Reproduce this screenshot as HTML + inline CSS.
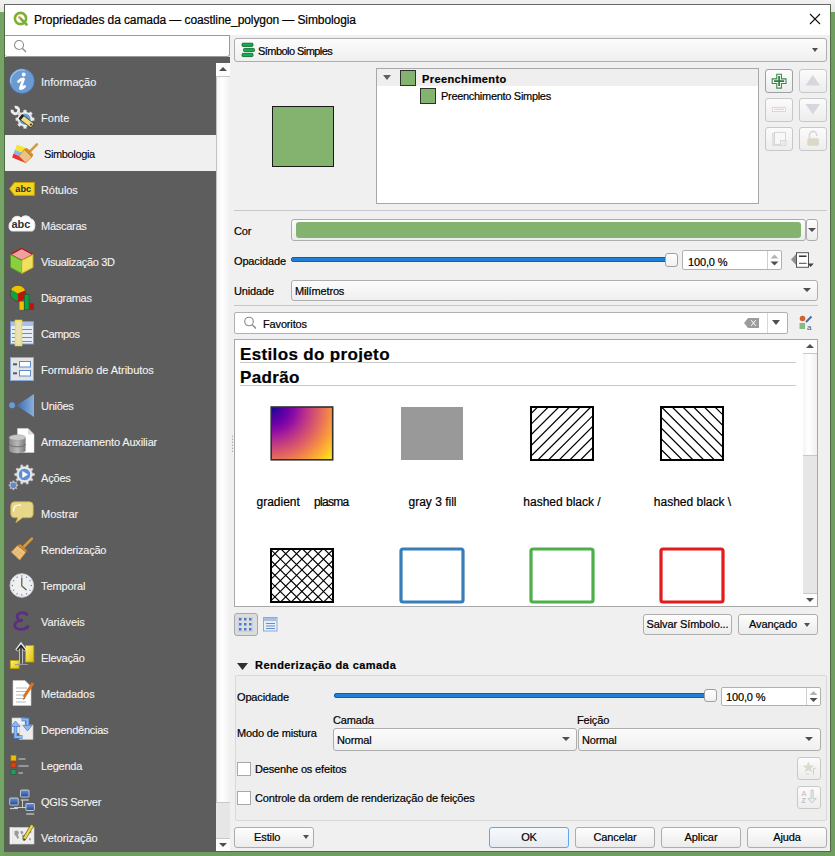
<!DOCTYPE html>
<html><head><meta charset="utf-8">
<style>
*{box-sizing:border-box;margin:0;padding:0}
html,body{width:835px;height:856px;overflow:hidden}
body{position:relative;background:#6f9e60;font-family:"Liberation Sans",sans-serif;font-size:11px;color:#000}
.a{position:absolute}
.t{position:absolute;white-space:nowrap;line-height:13px;font-size:11px;letter-spacing:-0.15px;-webkit-text-stroke:0.2px currentColor}
#topbar{left:0;top:0;width:835px;height:12px;background:linear-gradient(#f2f2f2,#e4e4e4)}
#dlg{left:4px;top:4px;width:827px;height:848px;background:#f0f0f0;border:1px solid #4d6a45;border-top-color:#6a6a6a}
#title{left:5px;top:5px;width:825px;height:30px;background:#fff}
#side{left:5px;top:57px;width:225px;height:794px;background:#5d5d5d;overflow:hidden}
.row{position:absolute;left:0;width:211px;height:36px}
.row.sel{background:#f0f0f0}
.row .lbl{position:absolute;left:36px;top:13px;color:#f4f4f4;font-size:11px;line-height:13px;white-space:nowrap;-webkit-text-stroke:0.1px currentColor}
.row.sel .lbl{left:39px;color:#000}
.row svg{position:absolute;left:5px;top:6px}
.btn{position:absolute;border:1px solid #adadad;border-radius:3px;background:linear-gradient(#fdfdfd,#ececec);font-size:11px;line-height:19.5px;text-align:center;white-space:nowrap;letter-spacing:-0.1px;-webkit-text-stroke:0.2px currentColor}
.combo{position:absolute;border:1px solid #adadad;border-radius:3px;background:linear-gradient(#fcfcfc,#efefef);font-size:11px;white-space:nowrap}
.arrow{position:absolute;width:0;height:0;border-left:5px solid transparent;border-right:5px solid transparent;border-top:5px solid #505050}
.hline{position:absolute;height:1px;background:#c8c8c8}
</style></head><body>
<div id="topbar" class="a"></div>
<div class="a" style="left:0;top:12px;width:4px;height:844px;background:#76a466"></div>
<div id="dlg" class="a"></div>
<div id="title" class="a"></div>
<!-- title -->
<svg class="a" style="left:13px;top:11px" width="16" height="16" viewBox="0 0 16 16">
 <circle cx="7.5" cy="7.5" r="5.6" fill="none" stroke="#80b030" stroke-width="2.6"/>
 <line x1="8" y1="8" x2="13.5" y2="13.5" stroke="#78b040" stroke-width="2.6" stroke-linecap="round"/>
 <circle cx="6.5" cy="6.5" r="1.3" fill="#f08030"/>
</svg>
<div class="t" style="left:34px;top:13px;font-size:12px;line-height:14px;letter-spacing:-0.09px">Propriedades da camada — coastline_polygon — Simbologia</div>
<svg class="a" style="left:809px;top:13px" width="12" height="12" viewBox="0 0 12 12"><path d="M1 1L11 11M11 1L1 11" stroke="#111" stroke-width="1.1"/></svg>

<!-- search -->
<div class="a" style="left:5px;top:35px;width:225px;height:22px;background:#fff;border:1px solid #9a9a9a;border-radius:0 0 3px 3px;border-left:none"></div>

<div id="side" class="a">
<div class="row" style="top:6px"><div class="lbl" style="letter-spacing:0.04px">Informação</div></div>
<div class="row" style="top:42px"><div class="lbl" style="letter-spacing:0.03px">Fonte</div></div>
<div class="row sel" style="top:78px"><div class="lbl" style="letter-spacing:-0.37px">Simbologia</div></div>
<div class="row" style="top:114px"><div class="lbl" style="letter-spacing:-0.09px">Rótulos</div></div>
<div class="row" style="top:150px"><div class="lbl" style="letter-spacing:-0.26px">Máscaras</div></div>
<div class="row" style="top:186px"><div class="lbl" style="letter-spacing:-0.34px">Visualização 3D</div></div>
<div class="row" style="top:222px"><div class="lbl" style="letter-spacing:-0.28px">Diagramas</div></div>
<div class="row" style="top:258px"><div class="lbl" style="letter-spacing:-0.39px">Campos</div></div>
<div class="row" style="top:294px"><div class="lbl" style="letter-spacing:-0.04px">Formulário de Atributos</div></div>
<div class="row" style="top:330px"><div class="lbl" style="letter-spacing:-0.29px">Uniões</div></div>
<div class="row" style="top:366px"><div class="lbl" style="letter-spacing:-0.14px">Armazenamento Auxiliar</div></div>
<div class="row" style="top:402px"><div class="lbl" style="letter-spacing:-0.18px">Ações</div></div>
<div class="row" style="top:438px"><div class="lbl" style="letter-spacing:-0.01px">Mostrar</div></div>
<div class="row" style="top:474px"><div class="lbl" style="letter-spacing:-0.22px">Renderização</div></div>
<div class="row" style="top:510px"><div class="lbl" style="letter-spacing:-0.12px">Temporal</div></div>
<div class="row" style="top:546px"><div class="lbl" style="letter-spacing:-0.08px">Variáveis</div></div>
<div class="row" style="top:582px"><div class="lbl" style="letter-spacing:-0.2px">Elevação</div></div>
<div class="row" style="top:618px"><div class="lbl" style="letter-spacing:-0.1px">Metadados</div></div>
<div class="row" style="top:654px"><div class="lbl" style="letter-spacing:-0.25px">Dependências</div></div>
<div class="row" style="top:690px"><div class="lbl" style="letter-spacing:-0.25px">Legenda</div></div>
<div class="row" style="top:726px"><div class="lbl" style="letter-spacing:-0.26px">QGIS Server</div></div>
<div class="row" style="top:762px"><div class="lbl" style="letter-spacing:-0.09px">Vetorização</div></div>
</div>
<svg class="a" style="left:5px;top:57px" width="211" height="794" viewBox="5 57 211 794">
<defs>
 <radialGradient id="gInfo" cx="0.35" cy="0.3" r="0.8"><stop offset="0" stop-color="#a8c8ee"/><stop offset="1" stop-color="#3f74bc"/></radialGradient>
 <linearGradient id="gBubble" x1="0" y1="0" x2="0" y2="1"><stop offset="0" stop-color="#f4eaa8"/><stop offset="1" stop-color="#d8c860"/></linearGradient>
 <linearGradient id="gTri" x1="0" y1="0" x2="1" y2="0"><stop offset="0" stop-color="#3a6ab0"/><stop offset="1" stop-color="#8ab0e0"/></linearGradient>
 <linearGradient id="gMon" x1="0" y1="0" x2="0" y2="1"><stop offset="0" stop-color="#6a90d0"/><stop offset="1" stop-color="#1f4a9a"/></linearGradient>
</defs>
<!-- 0 Informacao cy=81 -->
<circle cx="22" cy="81" r="12.3" fill="#6a9bd3" stroke="#4a78b8" stroke-width="0.7"/>
<path d="M11 83.5 A11 11 0 0 1 25 70.5" stroke="#9cc2ec" stroke-width="1.3" fill="none"/>
<path d="M18.4 81.6 Q21.3 78.6 23.6 79 L20.3 88.5 Q22.8 88.8 24.6 86.4" stroke="#fff" stroke-width="2.7" fill="none" stroke-linecap="round" stroke-linejoin="round"/>
<circle cx="23.7" cy="74.4" r="2" fill="#fff"/>
<!-- 1 Fonte cy=117 -->
<path d="M32.23 117.61L34.21 117.93L34.21 120.47L32.23 120.79L31.23 123.19L32.42 124.81L30.61 126.62L28.99 125.43L26.59 126.43L26.27 128.41L23.73 128.41L23.41 126.43L21.01 125.43L19.39 126.62L17.58 124.81L18.77 123.19L17.77 120.79L15.79 120.47L15.79 117.93L17.77 117.61L18.77 115.21L17.58 113.59L19.39 111.78L21.01 112.97L23.41 111.97L23.73 109.99L26.27 109.99L26.59 111.97L28.99 112.97L30.61 111.78L32.42 113.59L31.23 115.21z" fill="#ececec" stroke="#c4c4c4" stroke-width="0.5"/>
<circle cx="25" cy="119.2" r="5.9" fill="#6d9dd6" stroke="#fff" stroke-width="0.5"/>
<path d="M14.71 107.17 A3.3 3.3 0 1 1 12.17 109.71" stroke="#ececec" stroke-width="2.9" fill="none"/>
<line x1="17.8" y1="112.8" x2="21.2" y2="116" stroke="#d8d8d0" stroke-width="2.6"/>
<line x1="20.6" y1="116.6" x2="32.6" y2="125.8" stroke="#3a3a28" stroke-width="6"/>
<line x1="20.9" y1="116.9" x2="32.2" y2="125.5" stroke="#efdc80" stroke-width="4.6"/>
<line x1="20.4" y1="116.4" x2="22.4" y2="118" stroke="#1e1e1e" stroke-width="5.4"/>
<circle cx="30.9" cy="124.6" r="1.1" fill="#333"/>
<!-- 2 Simbologia cy=153 -->
<path d="M13.57 153.57 L26.92 158.95 L25.6 163 L12.1 157.5z" fill="#ee3030"/>
<path d="M15.04 149.64 L28.24 154.9 L26.92 158.95 L13.57 153.57z" fill="#88b4e8"/>
<path d="M17 144.4 L30 149.5 L28.24 154.9 L15.04 149.64z" fill="#f6e23a"/>



<line x1="36.9" y1="144.4" x2="28.5" y2="152.8" stroke="#d89a38" stroke-width="2.6" stroke-linecap="round"/>
<path d="M18.9 156.1 L24.3 149.4 L31.9 157 L25.6 162.9z" fill="#ecc384" stroke="#c88a30" stroke-width="0.8"/>
<path d="M24.3 149.4 L27 148.5 L32.8 154.5 L31.9 157z" fill="#d49030" stroke="#b07020" stroke-width="0.6"/>
<!-- 3 Rotulos cy=189 -->
<path d="M9.6 188.8 L14.5 182.5 H34.3 V195.4 H14.5z" fill="#f2d421" stroke="#c9a400" stroke-width="1"/>
<text x="15.3" y="192.2" font-family="Liberation Sans" font-weight="bold" font-size="9.2" fill="#2a2a2a">abc</text>
<!-- 4 Mascaras cy=225 -->
<path d="M12 231 C8 231 8 222 12 221 C12 216 19 215 21 218 C23 215 29 215 31 219 C36 219 36 231 32 231z" fill="#fff" stroke="#e8e8f0" stroke-width="1"/>
<text x="11.5" y="227.6" font-family="Liberation Sans" font-weight="bold" font-size="11" fill="#333">abc</text>
<!-- 5 Visualizacao 3D cy=261 -->
<path d="M21.7 248.5 L33 254.5 L21.7 260.5 L10.5 254.5z" fill="#f0a0a0" stroke="#b81010" stroke-width="1.2"/>
<path d="M10.5 254.5 L21.7 260.5 V273.5 L10.5 267.5z" fill="#88d040" stroke="#5a9a20" stroke-width="1"/>
<path d="M33 254.5 L21.7 260.5 V273.5 L33 267.5z" fill="#f0e060" stroke="#c8a820" stroke-width="1"/>
<!-- 6 Diagramas cy=297 -->
<circle cx="18" cy="293.5" r="7.8" fill="#10a040" stroke="#5a2a10" stroke-width="0.6"/>
<path d="M18 293.5 V285.7 A7.8 7.8 0 0 1 25.2 290.5z" fill="#f0c000"/>
<path d="M18 293.5 L25.2 290.5 A7.8 7.8 0 0 1 18 301.3z" fill="#c01010"/>
<path d="M11 289.5 A7.8 7.8 0 0 1 18 285.7 V293.5z" fill="#f0c000"/>
<rect x="19.5" y="301.5" width="4.3" height="8.3" fill="#f0c000"/>
<rect x="24.5" y="294.7" width="4.5" height="15.1" fill="#10a040" stroke="#0a6020" stroke-width="0.6"/>
<rect x="29.6" y="303.3" width="4.2" height="6.5" fill="#c01010"/>
<!-- 7 Campos cy=333 -->
<rect x="10.5" y="321.5" width="23" height="22.5" fill="#e8eef8" stroke="#7a9ad0" stroke-width="1"/>
<rect x="11" y="322" width="22" height="4" fill="#a8c0e8"/>
<path d="M12 329.5h20M12 333.5h20M12 337.5h20M12 341.5h20" stroke="#6a8ac8" stroke-width="1"/>
<rect x="15.5" y="320.5" width="6" height="25" fill="#e8e0c0" stroke="#f0e040" stroke-width="1.5"/>
<!-- 8 Formulario cy=369 -->
<rect x="10.5" y="357.5" width="23" height="23" fill="#e4e4e4" stroke="#8aa8d8" stroke-width="1"/>
<rect x="19.5" y="361.5" width="11" height="5.5" fill="#fff" stroke="#5a8ad0" stroke-width="1"/>
<rect x="19.5" y="370.5" width="11" height="5.5" fill="#fff" stroke="#5a8ad0" stroke-width="1"/>
<rect x="13" y="363.3" width="4" height="2" fill="#4a5a80"/>
<rect x="13" y="372.3" width="4" height="2" fill="#4a5a80"/>
<!-- 9 Unioes cy=405 -->
<circle cx="12.1" cy="405.3" r="3" fill="#6a9ad8"/>
<path d="M16.5 405.5 L34 394 V417z" fill="url(#gTri)"/>
<!-- 10 Armazenamento cy=441 -->
<path d="M17.5 428.5 H28 L34 434.5 V452.5 H17.5z" fill="#fff" stroke="#ddd" stroke-width="0.5"/>
<path d="M28 428.5 V434.5 H34z" fill="#ddd"/>
<defs><linearGradient id="gDb" x1="0" y1="0" x2="1" y2="0"><stop offset="0" stop-color="#8a8a8a"/><stop offset="0.5" stop-color="#b8b8b8"/><stop offset="1" stop-color="#7a7a7a"/></linearGradient></defs>
<path d="M9.2 437.5 V450.5 A8.2 2.8 0 0 0 25.6 450.5 V437.5z" fill="url(#gDb)"/>
<ellipse cx="17.4" cy="437.5" rx="8.2" ry="2.8" fill="#c8c8c8" stroke="#9a9a9a" stroke-width="0.5"/>
<path d="M9.2 444 A8.2 2.8 0 0 0 25.6 444" stroke="#6a6a6a" stroke-width="0.9" fill="none"/>
<!-- 11 Acoes cy=477 -->
<path d="M32.40 473.25L34.46 473.56L34.46 475.44L32.40 475.75L31.63 478.13L33.11 479.59L32.00 481.11L30.16 480.16L28.13 481.63L28.47 483.68L26.68 484.26L25.75 482.40L23.25 482.40L22.32 484.26L20.53 483.68L20.87 481.63L18.84 480.16L17.00 481.11L15.89 479.59L17.37 478.13L16.60 475.75L14.54 475.44L14.54 473.56L16.60 473.25L17.37 470.87L15.89 469.41L17.00 467.89L18.84 468.84L20.87 467.37L20.53 465.32L22.32 464.74L23.25 466.60L25.75 466.60L26.68 464.74L28.47 465.32L28.13 467.37L30.16 468.84L32.00 467.89L33.11 469.41L31.63 470.87z" fill="#e4e4e4" stroke="#b8b8b8" stroke-width="0.6"/>
<circle cx="24.5" cy="474.5" r="6.3" fill="#6090d0" stroke="#fff" stroke-width="0.8"/>
<path d="M22.3 471 L28 474.5 L22.3 478z" fill="#fff"/>
<path d="M16.83 484.62L17.97 484.76L17.97 485.84L16.83 485.98L16.31 487.24L17.01 488.15L16.25 488.91L15.34 488.21L14.08 488.73L13.94 489.87L12.86 489.87L12.72 488.73L11.46 488.21L10.55 488.91L9.79 488.15L10.49 487.24L9.97 485.98L8.83 485.84L8.83 484.76L9.97 484.62L10.49 483.36L9.79 482.45L10.55 481.69L11.46 482.39L12.72 481.87L12.86 480.73L13.94 480.73L14.08 481.87L15.34 482.39L16.25 481.69L17.01 482.45L16.31 483.36z" fill="#d8d8d8" stroke="#aaa" stroke-width="0.6"/>
<circle cx="13.4" cy="485.3" r="2.8" fill="#5a8ad0"/>
<!-- 12 Mostrar cy=513 -->
<path d="M14.5 501.8 H29.5 Q33.2 501.8 33.2 505.5 V514 Q33.2 517.7 29.5 517.7 H22.5 L15.9 522.7 L17.8 517.7 H14.5 Q10.8 517.7 10.8 514 V505.5 Q10.8 501.8 14.5 501.8z" fill="#e6d888" stroke="#c8a848" stroke-width="0.9"/>
<path d="M13.6 511 Q13.4 504.8 20.5 504.8" stroke="#fff" stroke-width="1.3" fill="none" stroke-linecap="round"/>
<!-- 13 Renderizacao cy=549 -->
<line x1="31.9" y1="538.7" x2="22.6" y2="548" stroke="#d89a38" stroke-width="2.6" stroke-linecap="round"/>
<path d="M11.3 552.1 L17.6 545.4 L26 552.1 L19.7 560.1z" fill="#ecc384" stroke="#c88a30" stroke-width="0.8"/>
<path d="M17.6 545.4 L20.5 544.2 L27 550.7 L26 552.1z" fill="#d49030" stroke="#b07020" stroke-width="0.6"/>
<path d="M14 551 L21.5 557.5 M16 548.8 L23.5 555.3 M13.5 554 L18 550 M16 556.5 L21 552" stroke="#d8a860" stroke-width="0.5"/>
<!-- 14 Temporal cy=585 -->
<circle cx="21.8" cy="585.5" r="11.8" fill="#f0f0f0" stroke="#cfcfcf" stroke-width="1"/>
<g fill="#5a8ad0"><circle cx="21.8" cy="576" r="0.8"/><circle cx="21.8" cy="595" r="0.8"/><circle cx="12.3" cy="585.5" r="0.8"/><circle cx="31.3" cy="585.5" r="0.8"/><circle cx="26.5" cy="577.3" r="0.7"/><circle cx="30" cy="580.8" r="0.7"/><circle cx="30" cy="590.2" r="0.7"/><circle cx="26.5" cy="593.7" r="0.7"/><circle cx="17.1" cy="593.7" r="0.7"/><circle cx="13.6" cy="590.2" r="0.7"/><circle cx="13.6" cy="580.8" r="0.7"/><circle cx="17.1" cy="577.3" r="0.7"/></g>
<path d="M21.8 577.5 V586 L26.5 590" stroke="#555" stroke-width="1.2" fill="none"/>
<!-- 15 Variaveis cy=621 -->
<path d="M27 614.5 C24.5 611.8 17 612 17.2 616.8 C17.4 619.5 20 620.6 23 620.6 C18 620.6 14.5 622.3 14.8 625.6 C15.3 630.3 24.5 630.5 28 626.5" stroke="#5c2e80" stroke-width="2.8" fill="none" stroke-linecap="round"/>
<!-- 16 Elevacao cy=657 -->
<defs><linearGradient id="gYel" x1="0" y1="0" x2="1" y2="1"><stop offset="0" stop-color="#fff080"/><stop offset="1" stop-color="#e0c000"/></linearGradient></defs>
<rect x="25.5" y="645.5" width="8.3" height="16.5" fill="url(#gYel)" stroke="#b8a000" stroke-width="0.8"/>
<rect x="10.3" y="660.5" width="8.8" height="8" fill="url(#gYel)" stroke="#b8a000" stroke-width="0.8"/>
<path d="M15 664.5 H28" stroke="#999" stroke-width="1"/>
<path d="M21 663.5 V648" stroke="#e8e8e8" stroke-width="3.4"/>
<path d="M16.5 650.5 L21 644.5 L25.5 650.5" stroke="#e8e8e8" stroke-width="3.2" fill="none"/>
<path d="M21 663.5 V647" stroke="#222" stroke-width="1.5"/>
<path d="M17.2 650.2 L21 645.5 L24.8 650.2" stroke="#222" stroke-width="1.6" fill="none"/>
<!-- 17 Metadados cy=693 -->
<path d="M13 680.5 H25 L31 686.5 V705.5 H13z" fill="#fff" stroke="#ccc" stroke-width="0.6"/>
<path d="M16 688h11M16 691.5h11M16 695h9M16 698.5h8M16 702h10" stroke="#aaa" stroke-width="0.8"/>
<line x1="33" y1="683" x2="24" y2="697" stroke="#e07020" stroke-width="3"/>
<path d="M24 697 L23 700 L25.5 698z" fill="#555"/>
<!-- 18 Dependencias cy=729 -->
<rect x="12" y="718" width="13" height="15" fill="#f0f0f0" stroke="#c8c8c8" stroke-width="0.6"/>
<rect x="19.5" y="725" width="13.5" height="14.5" fill="#ececec" stroke="#c0c0c0" stroke-width="0.6"/>
<path d="M21.5 719.5 H27.5 V726" stroke="#4a7ac8" stroke-width="3.6" fill="none"/>
<path d="M21.5 719.5 H27.5 V726" stroke="#8ab8f0" stroke-width="2.2" fill="none"/>
<path d="M23 725.5 L27.5 731 L32 725.5z" fill="#8ab8f0" stroke="#4a7ac8" stroke-width="0.7"/>
<path d="M15.5 726 V737 H22.5" stroke="#4a7ac8" stroke-width="3.6" fill="none"/>
<path d="M15.5 726 V737 H22.5" stroke="#8ab8f0" stroke-width="2.2" fill="none"/>
<path d="M11 726.5 L15.5 721 L20 726.5z" fill="#8ab8f0" stroke="#4a7ac8" stroke-width="0.7"/>
<!-- 19 Legenda cy=765 -->
<rect x="11" y="755.5" width="5" height="5" fill="#f0c000" stroke="#c09000" stroke-width="0.6"/>
<rect x="11" y="762.5" width="5" height="5" fill="#e04010" stroke="#a03010" stroke-width="0.6"/>
<rect x="11" y="769.5" width="5" height="5" fill="#20a050" stroke="#106030" stroke-width="0.6"/>
<path d="M18.5 759H25.5M18.5 766H28.5M18.5 773H23" stroke="#aaa" stroke-width="1.4"/>
<!-- 20 QGIS Server cy=801 -->
<path d="M14 807.5 H30 M22.5 800 V808" stroke="#d8d8d8" stroke-width="0.9"/>
<rect x="9.7" y="798" width="8.5" height="7" rx="0.8" fill="url(#gMon)" stroke="#e0e0e0" stroke-width="0.8"/>
<path d="M10 808.5h8" stroke="#d0d0d0" stroke-width="1.2"/>
<rect x="20.5" y="790" width="8.5" height="7" rx="0.8" fill="url(#gMon)" stroke="#e0e0e0" stroke-width="0.8"/>
<path d="M20.8 800h8" stroke="#d0d0d0" stroke-width="1.2"/>
<rect x="25.9" y="803.5" width="8.5" height="7" rx="0.8" fill="url(#gMon)" stroke="#e0e0e0" stroke-width="0.8"/>
<path d="M26.2 814h8" stroke="#d0d0d0" stroke-width="1.2"/>
<!-- 21 Vetorizacao cy=837 -->
<rect x="10" y="827.5" width="24" height="16.5" fill="#eeeeee" stroke="#d8d8d8" stroke-width="0.6"/>
<rect x="10" y="827.5" width="2.5" height="16.5" fill="#f8f8f8" stroke="#d0d0d0" stroke-width="0.4"/>
<path d="M14.5 831 l3 -0.5 l1.5 2 l-1 2.5 l1 3 l-1.5 1 l-1.5 -3 l-1.5 -1z M20 831.5 l2.5 -0.5 l1 2 l-2 1.5z M22 835 l3 -0.5 l1 3 l-2 3 l-1.5 -2z M27 830.5 l4 0 l0.5 2 l-2 1 l-2.5 -1z M29 838 l2 0.5 l-0.5 2 l-1.5 -0.5z" fill="#9a9a9a"/>
<path d="M32.3 825.3 L24.2 838.8" stroke="#6a6020" stroke-width="3.6" stroke-linecap="round"/>
<path d="M32.3 825.3 L24.2 838.8" stroke="#ecd848" stroke-width="2.4"/>
<path d="M24.5 838.3 L23.3 841 L25.6 839.2z" fill="#444"/>
</svg>
<!-- side scrollbar -->
<div class="a" style="left:216px;top:63px;width:14px;height:788px;background:#e6e6e6"></div>
<div class="a" style="left:216px;top:63px;width:14px;height:13px;background:#fdfdfd"></div>
<div class="arrow" style="left:219px;top:67px;border-top:none;border-bottom:4px solid #505050;border-left-width:4px;border-right-width:4px"></div>
<div class="a" style="left:216px;top:76px;width:14px;height:727px;background:linear-gradient(90deg,#f4f4f4,#fff 40%,#f0f0f0);border-top:1px solid #c8c8c8;border-bottom:1px solid #c8c8c8;border-left:1px solid #c4c4c4"></div>
<svg class="a" style="left:231px;top:434px" width="3" height="20" viewBox="0 0 3 20"><g fill="#a8a8a8"><circle cx="1.5" cy="2.3" r="0.7"/><circle cx="1.5" cy="5.3" r="0.7"/><circle cx="1.5" cy="8.3" r="0.7"/><circle cx="1.5" cy="11.3" r="0.7"/><circle cx="1.5" cy="14.3" r="0.7"/><circle cx="1.5" cy="17.3" r="0.7"/></g></svg>
<div class="a" style="left:216px;top:838px;width:14px;height:13px;background:#fdfdfd;border-top:1px solid #c8c8c8"></div>
<div class="arrow" style="left:219px;top:843px;border-width:4px 4px 0 4px"></div>
<svg class="a" style="left:13px;top:39px" width="16" height="16" viewBox="0 0 16 16"><circle cx="6" cy="6" r="4.5" fill="none" stroke="#8a8a8a" stroke-width="1.1"/><path d="M9.3 9.3 L13 13" stroke="#8a8a8a" stroke-width="1.3"/></svg>
<!-- main content -->
<div class="combo" style="left:234px;top:38px;width:593px;height:24px"></div>
<svg class="a" style="left:241px;top:42px" width="16" height="16" viewBox="241 42 16 16">
<rect x="242" y="43.2" width="11" height="3.2" rx="1" fill="#10b050" stroke="#0a5a20" stroke-width="0.8"/>
<rect x="243.5" y="48.4" width="11" height="3.2" rx="1" fill="#10b050" stroke="#0a5a20" stroke-width="0.8"/>
<rect x="242" y="53.4" width="11" height="3.2" rx="1" fill="#10b050" stroke="#0a5a20" stroke-width="0.8"/>
</svg>
<div class="t" style="left:258px;top:44.7px;letter-spacing:-0.55px">Símbolo Simples</div>
<div class="arrow" style="left:812px;top:47.8px;border-width:4.2px 3.7px 0 3.7px"></div>

<div class="a" style="left:272px;top:106px;width:62px;height:61px;background:#83b36f;border:1px solid #1a1a1a"></div>

<!-- tree -->
<div class="a" style="left:376px;top:68px;width:383px;height:136px;background:#fff;border:1px solid #a8a8a8"></div>
<div class="a" style="left:377px;top:69px;width:381px;height:17px;background:#efefef"></div>
<div class="arrow" style="left:383px;top:75px;border-width:5px 4px 0 4px;border-top-color:#606060"></div>
<div class="a" style="left:400px;top:70px;width:16px;height:16px;background:#83b36f;border:1px solid #303030"></div>
<div class="t" style="left:422px;top:73.3px;font-weight:bold;letter-spacing:0.4px">Preenchimento</div>
<div class="a" style="left:420px;top:88px;width:16px;height:16px;background:#83b36f;border:1px solid #303030"></div>
<div class="t" style="left:441px;top:90.3px;letter-spacing:-0.3px">Preenchimento Simples</div>

<!-- side buttons -->
<div class="btn" style="left:765px;top:69px;width:28px;height:24px;border-color:#a0a0a0"></div>
<div class="btn" style="left:799px;top:69px;width:28px;height:24px;border-color:#c8c8c8;background:linear-gradient(#fbfbfb,#ededed)"></div>
<div class="btn" style="left:765px;top:98px;width:28px;height:24px;border-color:#c8c8c8;background:linear-gradient(#fbfbfb,#ededed)"></div>
<div class="btn" style="left:799px;top:98px;width:28px;height:24px;border-color:#c8c8c8;background:linear-gradient(#fbfbfb,#ededed)"></div>
<div class="btn" style="left:765px;top:127px;width:28px;height:24px;border-color:#c8c8c8;background:linear-gradient(#fbfbfb,#ededed)"></div>
<div class="btn" style="left:799px;top:127px;width:28px;height:24px;border-color:#c8c8c8;background:linear-gradient(#fbfbfb,#ededed)"></div>
<svg class="a" style="left:765px;top:69px" width="62" height="82" viewBox="765 69 62 82">
<path d="M776.8 74.3h4.6v4.6h4.6v4.6h-4.6v4.6h-4.6v-4.6h-4.6v-4.6h4.6z" fill="#fff" stroke="#3a8a48" stroke-width="1.1"/>
<path d="M779.1 76v10M774 81.2h10.2" stroke="#2f7a3c" stroke-width="1.7"/>
<path d="M805.5 85.5 L812.8 75 L820 85.5z" fill="#d4d8dc"/>
<path d="M805.5 104 L812.8 114.5 L820 104z" fill="#d4d8dc"/>
<rect x="772.5" y="107.3" width="13" height="4.2" fill="#fff" stroke="#dcc8c8" stroke-width="0.8"/>
<rect x="774" y="108.6" width="10" height="1.6" fill="#e4d4d4"/>
<rect x="772.5" y="133.5" width="10" height="12" fill="#e4e4e4" stroke="#d4d4d4" stroke-width="0.6"/>
<rect x="774.5" y="132.3" width="11" height="12" fill="#f8f8f8" stroke="#cfcfcf" stroke-width="0.8"/>
<rect x="780.5" y="140.3" width="5.5" height="5.5" fill="#ecece4" stroke="#cfcfc4" stroke-width="0.6"/>
<rect x="807.3" y="138.2" width="11.6" height="7.5" rx="1.5" fill="#dcd8c8"/>
<path d="M809.5 138.2 V135 A3.6 3.6 0 0 1 816.7 135 V136" stroke="#d8d8d8" stroke-width="1.6" fill="none"/>
</svg>

<div class="hline" style="left:234px;top:210px;width:593px"></div>

<!-- Cor -->
<div class="t" style="left:234px;top:225px">Cor</div>
<div class="btn" style="left:291px;top:219px;width:515px;height:22px"></div>
<div class="a" style="left:296px;top:222px;width:505px;height:16px;background:#83b36f;border-radius:3px"></div>
<div class="btn" style="left:806px;top:219px;width:12px;height:22px"></div>
<div class="arrow" style="left:808px;top:228px;border-width:4px 4px 0 4px"></div>

<!-- Opacidade -->
<div class="t" style="left:234px;top:255px">Opacidade</div>
<div class="a" style="left:291px;top:257px;width:380px;height:5px;background:#1e7fd8;border:1px solid #1060b0;border-radius:2px"></div>
<div class="a" style="left:665px;top:253px;width:13px;height:14px;background:linear-gradient(#fff,#f0f0f0);border:1px solid #a0a0a0;border-radius:3px"></div>
<div class="a" style="left:682px;top:250px;width:100px;height:20px;background:#fff;border:1px solid #b0b0b0;border-radius:2px"></div>
<div class="a" style="left:767px;top:251px;width:1px;height:18px;background:#d0d0d0"></div>
<div class="t" style="left:688px;top:255.5px">100,0 %</div>
<svg class="a" style="left:768px;top:251px" width="13" height="18" viewBox="0 0 13 18"><path d="M2.5 7.5L6.5 3.5L10.5 7.5z" fill="#b4b4b4"/><path d="M2.5 10.5L6.5 14.5L10.5 10.5z" fill="#505050"/></svg>
<svg class="a" style="left:789px;top:250px" width="26" height="20" viewBox="789 250 26 20">
<path d="M796.5 253.5 L791 259.5 L796.5 265.5z" fill="#909090"/>
<rect x="796.5" y="252.7" width="12" height="14.6" fill="#fff" stroke="#555" stroke-width="1"/>
<path d="M799 256.2h7.5" stroke="#222" stroke-width="1.4"/>
<path d="M799 263.3h7.5" stroke="#333" stroke-width="0.9"/>
<path d="M807.5 263.6 L813.8 263.6 L810.6 267z" fill="#444"/>
</svg>

<!-- Unidade -->
<div class="t" style="left:234px;top:285px">Unidade</div>
<div class="combo" style="left:291px;top:280px;width:527px;height:21px"></div>
<div class="t" style="left:295px;top:284.7px">Milímetros</div>
<div class="arrow" style="left:802.5px;top:288px;border-width:4px 4px 0 4px"></div>

<div class="hline" style="left:234px;top:305px;width:584px"></div>

<!-- search favoritos -->
<div class="a" style="left:234px;top:312px;width:554px;height:22px;background:#fff;border:1px solid #b0b0b0;border-radius:2px"></div>
<div class="a" style="left:767px;top:313px;width:1px;height:20px;background:#d8d8d8"></div>
<svg class="a" style="left:243px;top:315px" width="16" height="16" viewBox="0 0 16 16"><circle cx="6" cy="6.5" r="4.3" fill="none" stroke="#888" stroke-width="1.1"/><path d="M9.2 9.7 L13 13.5" stroke="#888" stroke-width="1.3"/></svg>
<div class="t" style="left:263px;top:318px">Favoritos</div>
<svg class="a" style="left:743px;top:317px" width="17" height="12" viewBox="0 0 17 12"><path d="M1 6 L5 1 H16 V11 H5z" fill="#9c9c9c"/><path d="M8.2 3.2 L12.8 8.8 M12.8 3.2 L8.2 8.8" stroke="#fff" stroke-width="1"/></svg>
<div class="arrow" style="left:772px;top:320px;border-width:5px 4.5px 0 4.5px"></div>
<svg class="a" style="left:796px;top:313px" width="20" height="20" viewBox="796 313 20 20">
<circle cx="802.5" cy="318.5" r="2.8" fill="#d4622a"/>
<path d="M806 322 L811.5 316.5" stroke="#3a6aa8" stroke-width="1.8"/>
<rect x="799.5" y="323" width="5.5" height="6" fill="#8ab88a"/>
<text x="807" y="329.5" font-family="Liberation Sans" font-size="8" fill="#555">a</text>
</svg>
<!-- symbols list -->
<div class="a" style="left:234px;top:339px;width:584px;height:268px;background:#fff;border:1px solid #a8a8a8"></div>
<div class="t" style="left:240px;top:346px;font-size:17px;line-height:18px;font-weight:bold;letter-spacing:0.35px">Estilos do projeto</div>
<div class="hline" style="left:240px;top:362px;width:556px;background:#c8c8c8"></div>
<div class="t" style="left:240px;top:369px;font-size:17px;line-height:18px;font-weight:bold;letter-spacing:0.35px">Padrão</div>
<div class="hline" style="left:240px;top:385px;width:556px;background:#c8c8c8"></div>

<svg class="a" style="left:235px;top:340px" width="568" height="266" viewBox="235 340 568 266">
<defs>
<radialGradient id="plasma" gradientUnits="userSpaceOnUse" cx="271" cy="407" r="82">
<stop offset="0" stop-color="#0d0887"/><stop offset="0.1" stop-color="#41049d"/><stop offset="0.2" stop-color="#6a00a8"/><stop offset="0.3" stop-color="#8f0da4"/><stop offset="0.4" stop-color="#b12a90"/><stop offset="0.5" stop-color="#cc4778"/><stop offset="0.6" stop-color="#e16462"/><stop offset="0.7" stop-color="#f2844b"/><stop offset="0.8" stop-color="#fca636"/><stop offset="0.9" stop-color="#fcce25"/><stop offset="1" stop-color="#f0f921"/>
</radialGradient>
<clipPath id="c1"><rect x="531" y="407" width="62" height="53"/></clipPath>
<clipPath id="c2"><rect x="661" y="407" width="62" height="53"/></clipPath>
<clipPath id="c3"><rect x="271" y="549" width="62" height="53"/></clipPath>
</defs>
<rect x="271.2" y="407" width="61.5" height="52.8" fill="url(#plasma)" stroke="#303030" stroke-width="1.6"/>
<rect x="401" y="407" width="62" height="53" fill="#999"/>
<rect x="531" y="407" width="62" height="53" fill="#fff"/><path clip-path="url(#c1)" d="M484.60 460L537.60 407M495.25 460L548.25 407M505.90 460L558.90 407M516.55 460L569.55 407M527.20 460L580.20 407M537.85 460L590.85 407M548.50 460L601.50 407M559.15 460L612.15 407M569.80 460L622.80 407M580.45 460L633.45 407M591.10 460L644.10 407" stroke="#000" stroke-width="1.2"/><rect x="531" y="407" width="62" height="53" fill="none" stroke="#000" stroke-width="2"/>
<rect x="661" y="407" width="62" height="53" fill="#fff"/><path clip-path="url(#c2)" d="M608.00 407L661.00 460M618.70 407L671.70 460M629.40 407L682.40 460M640.10 407L693.10 460M650.80 407L703.80 460M661.50 407L714.50 460M672.20 407L725.20 460M682.90 407L735.90 460M693.60 407L746.60 460M704.30 407L757.30 460M715.00 407L768.00 460" stroke="#000" stroke-width="1.2"/><rect x="661" y="407" width="62" height="53" fill="none" stroke="#000" stroke-width="2"/>
<rect x="271" y="549" width="62" height="53" fill="#fff"/><path clip-path="url(#c3)" d="M226.60 602L279.60 549M237.40 602L290.40 549M248.20 602L301.20 549M259.00 602L312.00 549M269.80 602L322.80 549M280.60 602L333.60 549M291.40 602L344.40 549M302.20 602L355.20 549M313.00 602L366.00 549M323.80 602L376.80 549M227.00 549L280.00 602M237.80 549L290.80 602M248.60 549L301.60 602M259.40 549L312.40 602M270.20 549L323.20 602M281.00 549L334.00 602M291.80 549L344.80 602M302.60 549L355.60 602M313.40 549L366.40 602M324.20 549L377.20 602" stroke="#000" stroke-width="1.1"/><rect x="271" y="549" width="62" height="53" fill="none" stroke="#000" stroke-width="2"/>
<rect x="401" y="549" width="62" height="53" rx="2" fill="#fff" stroke="#377eb8" stroke-width="3.2"/>
<rect x="531" y="549" width="62" height="53" rx="2" fill="#fff" stroke="#4daf4a" stroke-width="3.2"/>
<rect x="661" y="549" width="62" height="53" rx="2" fill="#fff" stroke="#e41a1c" stroke-width="3.2"/>
</svg>
<div class="t" style="left:256.5px;top:495px;font-size:12px;line-height:14px;letter-spacing:0">gradient</div>
<div class="t" style="left:314px;top:495px;font-size:12px;line-height:14px;letter-spacing:-0.7px">plasma</div>
<div class="t" style="left:408.5px;top:495px;font-size:12px;line-height:14px;letter-spacing:0">gray 3 fill</div>
<div class="t" style="left:523.3px;top:495px;font-size:12px;line-height:14px;letter-spacing:0">hashed black /</div>
<div class="t" style="left:653.8px;top:495px;font-size:12px;line-height:14px;letter-spacing:0">hashed black \</div>
<!-- list scrollbar -->
<div class="a" style="left:803px;top:340px;width:14px;height:266px;background:#e6e6e6;border-left:1px solid #e8e8e8"></div>
<div class="a" style="left:803px;top:340px;width:14px;height:13px;background:#fdfdfd"></div>
<div class="arrow" style="left:806px;top:344px;border-top:none;border-bottom:4px solid #505050;border-left-width:4px;border-right-width:4px"></div>
<div class="a" style="left:803px;top:353px;width:14px;height:103px;background:linear-gradient(90deg,#f4f4f4,#fff 40%,#f0f0f0);border-top:1px solid #c8c8c8;border-bottom:1px solid #c8c8c8"></div>
<div class="a" style="left:803px;top:593px;width:14px;height:13px;background:#fdfdfd;border-top:1px solid #c8c8c8"></div>
<div class="arrow" style="left:806px;top:598px;border-width:4px 4px 0 4px"></div>

<!-- view buttons -->
<div class="a" style="left:234px;top:613px;width:24px;height:23px;background:#dcdcdc;border:1px solid #a8a8a8;border-radius:3px"></div>
<svg class="a" style="left:238px;top:617px" width="15" height="15" viewBox="0 0 15 15"><g fill="#4a7ac8"><rect x="1" y="1" width="2.5" height="2.5"/><rect x="6" y="1" width="2.5" height="2.5"/><rect x="11" y="1" width="2.5" height="2.5"/><rect x="1" y="6" width="2.5" height="2.5"/><rect x="6" y="6" width="2.5" height="2.5"/><rect x="11" y="6" width="2.5" height="2.5"/><rect x="1" y="11" width="2.5" height="2.5"/><rect x="6" y="11" width="2.5" height="2.5"/><rect x="11" y="11" width="2.5" height="2.5"/></g><rect x="0.5" y="0.5" width="14" height="14" fill="none" stroke="#c0d0e8" stroke-width="0.8"/></svg>
<svg class="a" style="left:263px;top:617px" width="15" height="15" viewBox="0 0 15 15"><rect x="0.5" y="0.5" width="13.5" height="13.5" fill="#e8eef8" stroke="#8aaad8"/><rect x="1" y="1" width="12.5" height="3" fill="#a8c0e8"/><path d="M3 6.5h9M3 9h9M3 11.5h9" stroke="#6a8ac8"/></svg>
<div class="btn" style="left:643px;top:614px;width:89px;height:21px">Salvar Símbolo...</div>
<div class="btn" style="left:738px;top:614px;width:80px;height:21px;text-align:left;padding-left:10px">Avançado</div>
<div class="arrow" style="left:804px;top:623px;border-width:4px 3.5px 0 3.5px"></div>

<!-- rendering group -->
<svg class="a" style="left:236px;top:662px" width="13" height="9" viewBox="0 0 13 9"><path d="M1 1 H12 L6.5 8z" fill="#303030"/></svg>
<div class="t" style="left:255px;top:659px;font-weight:bold;letter-spacing:0.45px">Renderização da camada</div>
<div class="a" style="left:235px;top:675px;width:592px;height:146px;border:1px solid #d8d8d8;border-radius:2px;background:#eeeeee"></div>
<div class="t" style="left:237px;top:691px">Opacidade</div>
<div class="a" style="left:334px;top:693px;width:378px;height:5px;background:#1e7fd8;border:1px solid #1060b0;border-radius:2px"></div>
<div class="a" style="left:704px;top:689px;width:13px;height:13px;background:linear-gradient(#fff,#f0f0f0);border:1px solid #a0a0a0;border-radius:3px"></div>
<div class="a" style="left:721px;top:687px;width:100px;height:19px;background:#fff;border:1px solid #b0b0b0;border-radius:2px"></div>
<div class="a" style="left:806px;top:688px;width:1px;height:17px;background:#d0d0d0"></div>
<div class="t" style="left:726px;top:691px">100,0 %</div>
<svg class="a" style="left:807px;top:688px" width="13" height="17" viewBox="0 0 13 17"><path d="M2.5 7L6.5 3L10.5 7z" fill="#b4b4b4"/><path d="M2.5 10L6.5 14L10.5 10z" fill="#505050"/></svg>

<div class="t" style="left:333px;top:714px">Camada</div>
<div class="t" style="left:577px;top:714px">Feição</div>
<div class="t" style="left:237px;top:727px">Modo de mistura</div>
<div class="combo" style="left:333px;top:728px;width:244px;height:23px"></div>
<div class="t" style="left:337px;top:734px">Normal</div>
<div class="arrow" style="left:561.5px;top:737px;border-width:4px 4px 0 4px"></div>
<div class="combo" style="left:578px;top:728px;width:243px;height:23px"></div>
<div class="t" style="left:582px;top:734px">Normal</div>
<div class="arrow" style="left:805px;top:737px;border-width:4px 4px 0 4px"></div>

<div class="a" style="left:237px;top:762px;width:14px;height:14px;background:#fff;border:1px solid #a8a8a8"></div>
<div class="t" style="left:255px;top:763px">Desenhe os efeitos</div>
<div class="a" style="left:237px;top:791px;width:14px;height:14px;background:#fff;border:1px solid #a8a8a8"></div>
<div class="t" style="left:255px;top:792px">Controle da ordem de renderização de feições</div>
<div class="btn" style="left:797px;top:757px;width:24px;height:23px;border-color:#c8c8c8;background:linear-gradient(#fbfbfb,#ededed)"></div>
<div class="btn" style="left:797px;top:786px;width:24px;height:23px;border-color:#c8c8c8;background:linear-gradient(#fbfbfb,#ededed)"></div>
<svg class="a" style="left:797px;top:757px" width="24" height="52" viewBox="797 757 24 52">
<path d="M808.40 761.20L809.93 765.40L814.39 765.55L810.87 768.30L812.10 772.60L808.40 770.10L804.70 772.60L805.93 768.30L802.41 765.55L806.87 765.40z" fill="#dcd8cc"/>
<path d="M813.5 774.5 V768.5 L816.5 768" stroke="#c8c8c8" stroke-width="0.9" fill="none"/>
<path d="M806 774 H809" stroke="#c8c8c8" stroke-width="0.8"/>
<text x="801.3" y="795.6" font-family="Liberation Sans" font-size="7.5" font-weight="bold" fill="#dcc4c4">A</text>
<text x="801.6" y="803.2" font-family="Liberation Sans" font-size="7" font-weight="bold" fill="#b8c0d0">Z</text>
<path d="M811 790 H813.2 V798.5 H816.3 L812.1 803 L807.9 798.5 H811z" fill="#e8eaec" stroke="#c4c8cc" stroke-width="0.9"/>
</svg>

<!-- bottom buttons -->
<div class="btn" style="left:234px;top:827px;width:80px;height:21px;text-align:left;padding-left:19px">Estilo</div>
<div class="arrow" style="left:303px;top:835px;border-width:4px 3px 0 3px"></div>
<div class="btn" style="left:489px;top:827px;width:80px;height:21px;border-color:#5aa8f0;background:linear-gradient(#f6f9fc,#e6ebf0)">OK</div>
<div class="btn" style="left:575px;top:827px;width:80px;height:21px">Cancelar</div>
<div class="btn" style="left:661px;top:827px;width:80px;height:21px">Aplicar</div>
<div class="btn" style="left:747px;top:827px;width:80px;height:21px">Ajuda</div>

</body></html>
